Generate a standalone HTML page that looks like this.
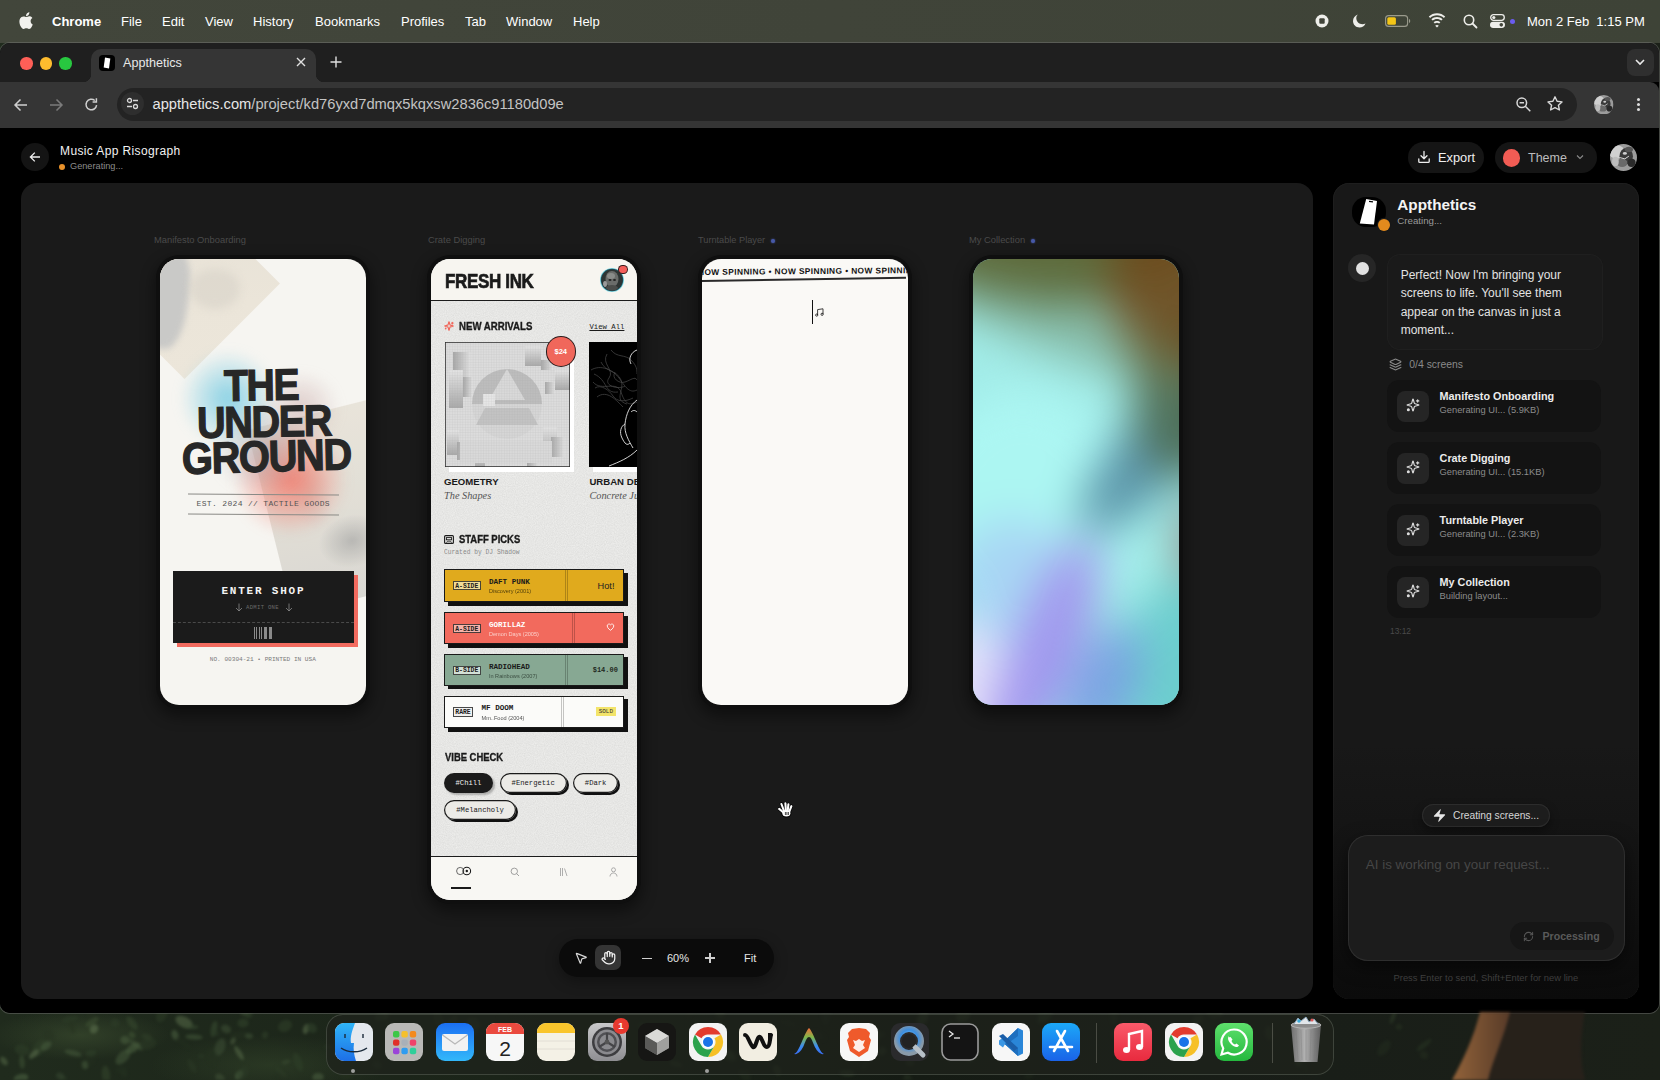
<!DOCTYPE html>
<html><head><meta charset="utf-8">
<style>
*{box-sizing:border-box;margin:0;padding:0}
html,body{width:1660px;height:1080px;overflow:hidden}
body{position:relative;font-family:"Liberation Sans",sans-serif;background:#1c2119;color:#fff}
.abs{position:absolute}
#wall{position:absolute;left:0;top:0;width:1660px;height:1080px;
 background:
 
 radial-gradient(ellipse 90px 25px at 80px 1035px,rgba(70,90,55,.45),transparent),
 radial-gradient(ellipse 120px 30px at 270px 1065px,rgba(60,80,48,.4),transparent),
 linear-gradient(90deg,#202b1d 0,#1b2419 30%,#151b14 55%,#191e18 80%,#1b2018 100%)}
#menubar{position:absolute;left:0;top:0;width:1660px;height:43px;font-size:13px;color:#fff;background:linear-gradient(90deg,#42463b,#404439 50%,#3e4337)}
#menubar span{position:absolute;top:13.5px;line-height:16px}
#win{position:absolute;left:0;top:43px;width:1659px;height:970px;background:#000;border-radius:10px;overflow:hidden;box-shadow:0 0 0 1px rgba(130,130,130,.4)}
#tabstrip{position:absolute;left:0;top:0;width:100%;height:39px;background:#1f1f1f}
#toolbar{position:absolute;left:0;top:39px;width:100%;height:46px;background:#353535;border-top-right-radius:9px}
.phone{position:absolute;overflow:hidden;border-radius:19px;box-shadow:0 0 0 4px #0f0f0f,0 6px 14px 6px rgba(0,0,0,.4)}
.phone .abs,.hv{position:absolute}
.hv{font-weight:bold;font-size:44px;line-height:36px;color:#272727;white-space:nowrap;transform-origin:0 50%;letter-spacing:-1.5px;-webkit-text-stroke:1.3px #272727}
</style></head><body>
<div id="wall"></div>
<svg class="abs" style="left:0;top:1012px;filter:blur(1.4px);opacity:.85" width="1660" height="68" viewBox="0 0 1660 68"><ellipse cx="470" cy="10" rx="3.5" ry="4.1" transform="rotate(66 470 10)" fill="#1e281a" opacity="0.36"/><ellipse cx="125" cy="28" rx="4.7" ry="4.2" transform="rotate(11 125 28)" fill="#4a6040" opacity="0.63"/><ellipse cx="72" cy="15" rx="6.9" ry="2.5" transform="rotate(75 72 15)" fill="#24301f" opacity="0.49"/><ellipse cx="91" cy="4" rx="4.4" ry="4.7" transform="rotate(77 91 4)" fill="#24301f" opacity="0.77"/><ellipse cx="239" cy="23" rx="9.5" ry="3.7" transform="rotate(173 239 23)" fill="#24301f" opacity="0.61"/><ellipse cx="1269" cy="21" rx="7.2" ry="4.3" transform="rotate(82 1269 21)" fill="#34442c" opacity="0.44"/><ellipse cx="963" cy="4" rx="7.5" ry="6.0" transform="rotate(148 963 4)" fill="#34442c" opacity="0.57"/><ellipse cx="624" cy="37" rx="9.9" ry="4.7" transform="rotate(68 624 37)" fill="#2a3824" opacity="0.35"/><ellipse cx="1304" cy="53" rx="8.6" ry="3.6" transform="rotate(72 1304 53)" fill="#1e281a" opacity="0.42"/><ellipse cx="276" cy="67" rx="6.1" ry="2.4" transform="rotate(108 276 67)" fill="#24301f" opacity="0.42"/><ellipse cx="147" cy="25" rx="3.2" ry="5.5" transform="rotate(111 147 25)" fill="#2e3e28" opacity="0.78"/><ellipse cx="452" cy="10" rx="8.2" ry="3.9" transform="rotate(125 452 10)" fill="#2a3824" opacity="0.59"/><ellipse cx="39" cy="36" rx="9.8" ry="5.5" transform="rotate(125 39 36)" fill="#2e3e28" opacity="0.76"/><ellipse cx="729" cy="43" rx="8.5" ry="5.0" transform="rotate(35 729 43)" fill="#34442c" opacity="0.52"/><ellipse cx="329" cy="35" rx="5.5" ry="2.1" transform="rotate(5 329 35)" fill="#2e3e28" opacity="0.44"/><ellipse cx="877" cy="23" rx="8.1" ry="3.4" transform="rotate(175 877 23)" fill="#2a3824" opacity="0.37"/><ellipse cx="285" cy="14" rx="7.4" ry="5.6" transform="rotate(151 285 14)" fill="#2e3e28" opacity="0.71"/><ellipse cx="123" cy="45" rx="9.4" ry="5.1" transform="rotate(135 123 45)" fill="#4a6040" opacity="0.55"/><ellipse cx="922" cy="6" rx="8.1" ry="3.9" transform="rotate(134 922 6)" fill="#2a3824" opacity="0.35"/><ellipse cx="184" cy="10" rx="9.3" ry="5.2" transform="rotate(26 184 10)" fill="#566a48" opacity="0.65"/><ellipse cx="21" cy="66" rx="7.5" ry="4.1" transform="rotate(168 21 66)" fill="#4a6040" opacity="0.72"/><ellipse cx="306" cy="17" rx="5.1" ry="3.0" transform="rotate(106 306 17)" fill="#566a48" opacity="0.73"/><ellipse cx="88" cy="50" rx="9.3" ry="4.6" transform="rotate(147 88 50)" fill="#24301f" opacity="0.41"/><ellipse cx="220" cy="35" rx="9.1" ry="5.1" transform="rotate(110 220 35)" fill="#4a6040" opacity="0.43"/><ellipse cx="360" cy="19" rx="6.6" ry="4.2" transform="rotate(137 360 19)" fill="#34442c" opacity="0.40"/><ellipse cx="402" cy="35" rx="6.6" ry="3.0" transform="rotate(94 402 35)" fill="#34442c" opacity="0.58"/><ellipse cx="439" cy="8" rx="9.6" ry="4.6" transform="rotate(66 439 8)" fill="#2a3824" opacity="0.59"/><ellipse cx="318" cy="65" rx="5.8" ry="3.9" transform="rotate(178 318 65)" fill="#4a6040" opacity="0.67"/><ellipse cx="490" cy="31" rx="5.7" ry="4.1" transform="rotate(53 490 31)" fill="#2a3824" opacity="0.60"/><ellipse cx="385" cy="3" rx="4.9" ry="2.5" transform="rotate(76 385 3)" fill="#34442c" opacity="0.42"/><ellipse cx="474" cy="19" rx="4.3" ry="5.6" transform="rotate(48 474 19)" fill="#2a3824" opacity="0.54"/><ellipse cx="121" cy="58" rx="3.5" ry="5.5" transform="rotate(82 121 58)" fill="#24301f" opacity="0.54"/><ellipse cx="1029" cy="64" rx="4.8" ry="2.7" transform="rotate(168 1029 64)" fill="#1e281a" opacity="0.53"/><ellipse cx="22" cy="50" rx="6.9" ry="2.8" transform="rotate(85 22 50)" fill="#3e5234" opacity="0.65"/><ellipse cx="312" cy="16" rx="4.4" ry="5.5" transform="rotate(131 312 16)" fill="#2e3e28" opacity="0.79"/><ellipse cx="1214" cy="1" rx="9.2" ry="3.7" transform="rotate(10 1214 1)" fill="#34442c" opacity="0.56"/><ellipse cx="646" cy="18" rx="9.8" ry="4.2" transform="rotate(44 646 18)" fill="#34442c" opacity="0.37"/><ellipse cx="265" cy="23" rx="3.6" ry="3.1" transform="rotate(118 265 23)" fill="#3e5234" opacity="0.39"/><ellipse cx="571" cy="20" rx="3.6" ry="5.8" transform="rotate(154 571 20)" fill="#1e281a" opacity="0.54"/><ellipse cx="865" cy="52" rx="6.5" ry="3.1" transform="rotate(111 865 52)" fill="#1e281a" opacity="0.57"/><ellipse cx="910" cy="50" rx="4.0" ry="4.1" transform="rotate(91 910 50)" fill="#2a3824" opacity="0.55"/><ellipse cx="847" cy="61" rx="7.9" ry="2.9" transform="rotate(6 847 61)" fill="#34442c" opacity="0.59"/><ellipse cx="27" cy="36" rx="4.7" ry="3.1" transform="rotate(82 27 36)" fill="#24301f" opacity="0.75"/><ellipse cx="133" cy="36" rx="8.2" ry="3.9" transform="rotate(146 133 36)" fill="#4a6040" opacity="0.68"/><ellipse cx="298" cy="50" rx="9.8" ry="4.0" transform="rotate(69 298 50)" fill="#2e3e28" opacity="0.70"/><ellipse cx="214" cy="17" rx="8.2" ry="3.2" transform="rotate(102 214 17)" fill="#3e5234" opacity="0.57"/><ellipse cx="676" cy="52" rx="6.8" ry="3.2" transform="rotate(15 676 52)" fill="#34442c" opacity="0.44"/><ellipse cx="390" cy="14" rx="4.5" ry="4.3" transform="rotate(26 390 14)" fill="#34442c" opacity="0.34"/><ellipse cx="1189" cy="35" rx="7.9" ry="2.9" transform="rotate(162 1189 35)" fill="#2a3824" opacity="0.35"/><ellipse cx="175" cy="23" rx="5.3" ry="3.4" transform="rotate(72 175 23)" fill="#4a6040" opacity="0.67"/><ellipse cx="70" cy="7" rx="8.8" ry="3.1" transform="rotate(168 70 7)" fill="#2e3e28" opacity="0.55"/><ellipse cx="458" cy="53" rx="6.0" ry="2.1" transform="rotate(137 458 53)" fill="#1e281a" opacity="0.46"/><ellipse cx="1043" cy="3" rx="6.2" ry="5.0" transform="rotate(116 1043 3)" fill="#2a3824" opacity="0.57"/><ellipse cx="409" cy="17" rx="7.6" ry="3.6" transform="rotate(43 409 17)" fill="#1e281a" opacity="0.42"/><ellipse cx="243" cy="11" rx="4.5" ry="5.6" transform="rotate(89 243 11)" fill="#2e3e28" opacity="0.80"/><ellipse cx="132" cy="23" rx="3.6" ry="3.0" transform="rotate(47 132 23)" fill="#3e5234" opacity="0.69"/><ellipse cx="730" cy="43" rx="4.5" ry="3.1" transform="rotate(45 730 43)" fill="#34442c" opacity="0.43"/><ellipse cx="452" cy="55" rx="3.9" ry="3.7" transform="rotate(137 452 55)" fill="#1e281a" opacity="0.45"/><ellipse cx="106" cy="63" rx="9.5" ry="4.1" transform="rotate(84 106 63)" fill="#3e5234" opacity="0.45"/><ellipse cx="220" cy="66" rx="3.8" ry="5.3" transform="rotate(126 220 66)" fill="#566a48" opacity="0.39"/><ellipse cx="826" cy="3" rx="9.7" ry="4.5" transform="rotate(95 826 3)" fill="#2a3824" opacity="0.33"/><ellipse cx="281" cy="60" rx="7.5" ry="2.3" transform="rotate(41 281 60)" fill="#2e3e28" opacity="0.45"/><ellipse cx="49" cy="23" rx="5.9" ry="4.7" transform="rotate(36 49 23)" fill="#24301f" opacity="0.38"/><ellipse cx="719" cy="14" rx="4.4" ry="3.9" transform="rotate(48 719 14)" fill="#2a3824" opacity="0.59"/><ellipse cx="605" cy="45" rx="4.0" ry="3.6" transform="rotate(38 605 45)" fill="#2a3824" opacity="0.42"/><ellipse cx="115" cy="11" rx="4.3" ry="4.6" transform="rotate(94 115 11)" fill="#2e3e28" opacity="0.65"/><ellipse cx="245" cy="0" rx="5.0" ry="3.4" transform="rotate(172 245 0)" fill="#4a6040" opacity="0.52"/><ellipse cx="1115" cy="21" rx="3.6" ry="4.8" transform="rotate(35 1115 21)" fill="#34442c" opacity="0.36"/><ellipse cx="596" cy="55" rx="3.3" ry="2.1" transform="rotate(11 596 55)" fill="#34442c" opacity="0.36"/><ellipse cx="91" cy="41" rx="5.5" ry="3.3" transform="rotate(172 91 41)" fill="#2e3e28" opacity="0.77"/><ellipse cx="1198" cy="7" rx="6.3" ry="5.1" transform="rotate(142 1198 7)" fill="#34442c" opacity="0.34"/><ellipse cx="720" cy="1" rx="5.1" ry="4.8" transform="rotate(27 720 1)" fill="#34442c" opacity="0.44"/><ellipse cx="233" cy="29" rx="3.7" ry="2.3" transform="rotate(112 233 29)" fill="#566a48" opacity="0.57"/><ellipse cx="604" cy="42" rx="8.2" ry="5.4" transform="rotate(120 604 42)" fill="#34442c" opacity="0.39"/><ellipse cx="822" cy="25" rx="4.4" ry="3.0" transform="rotate(44 822 25)" fill="#1e281a" opacity="0.36"/><ellipse cx="94" cy="17" rx="4.7" ry="4.1" transform="rotate(117 94 17)" fill="#566a48" opacity="0.80"/><ellipse cx="148" cy="32" rx="8.7" ry="5.4" transform="rotate(165 148 32)" fill="#2e3e28" opacity="0.45"/><ellipse cx="73" cy="41" rx="8.8" ry="2.8" transform="rotate(14 73 41)" fill="#4a6040" opacity="0.55"/><ellipse cx="377" cy="53" rx="3.7" ry="4.4" transform="rotate(112 377 53)" fill="#34442c" opacity="0.40"/><ellipse cx="64" cy="68" rx="3.3" ry="4.9" transform="rotate(165 64 68)" fill="#2e3e28" opacity="0.53"/><ellipse cx="46" cy="34" rx="6.4" ry="3.6" transform="rotate(143 46 34)" fill="#4a6040" opacity="0.64"/><ellipse cx="132" cy="11" rx="7.9" ry="3.6" transform="rotate(51 132 11)" fill="#3e5234" opacity="0.49"/><ellipse cx="286" cy="50" rx="4.4" ry="2.0" transform="rotate(162 286 50)" fill="#3e5234" opacity="0.53"/><ellipse cx="22" cy="38" rx="7.5" ry="5.6" transform="rotate(16 22 38)" fill="#2e3e28" opacity="0.68"/><ellipse cx="249" cy="24" rx="4.1" ry="2.7" transform="rotate(12 249 24)" fill="#4a6040" opacity="0.49"/><ellipse cx="1214" cy="3" rx="5.2" ry="4.4" transform="rotate(115 1214 3)" fill="#1e281a" opacity="0.49"/><ellipse cx="1196" cy="11" rx="4.6" ry="3.6" transform="rotate(152 1196 11)" fill="#2a3824" opacity="0.47"/><ellipse cx="60" cy="64" rx="4.1" ry="3.4" transform="rotate(27 60 64)" fill="#4a6040" opacity="0.37"/><ellipse cx="34" cy="42" rx="6.4" ry="2.9" transform="rotate(137 34 42)" fill="#566a48" opacity="0.73"/><ellipse cx="520" cy="25" rx="6.5" ry="4.6" transform="rotate(7 520 25)" fill="#1e281a" opacity="0.39"/><ellipse cx="1045" cy="5" rx="9.3" ry="4.6" transform="rotate(141 1045 5)" fill="#2a3824" opacity="0.60"/><ellipse cx="1424" cy="33" rx="9.4" ry="2.7" transform="rotate(142 1424 33)" fill="#2a3824" opacity="0.55"/><ellipse cx="1114" cy="3" rx="9.8" ry="3.8" transform="rotate(94 1114 3)" fill="#2a3824" opacity="0.38"/><ellipse cx="777" cy="58" rx="5.6" ry="3.5" transform="rotate(66 777 58)" fill="#34442c" opacity="0.53"/><ellipse cx="641" cy="12" rx="3.3" ry="5.3" transform="rotate(46 641 12)" fill="#1e281a" opacity="0.58"/><ellipse cx="1299" cy="50" rx="4.6" ry="3.2" transform="rotate(113 1299 50)" fill="#34442c" opacity="0.57"/><ellipse cx="191" cy="15" rx="7.6" ry="2.1" transform="rotate(0 191 15)" fill="#3e5234" opacity="0.59"/><ellipse cx="194" cy="25" rx="8.8" ry="2.6" transform="rotate(3 194 25)" fill="#4a6040" opacity="0.55"/><ellipse cx="92" cy="10" rx="7.7" ry="3.1" transform="rotate(146 92 10)" fill="#3e5234" opacity="0.64"/><ellipse cx="815" cy="24" rx="6.1" ry="5.7" transform="rotate(132 815 24)" fill="#2a3824" opacity="0.31"/><ellipse cx="85" cy="53" rx="3.1" ry="4.2" transform="rotate(169 85 53)" fill="#4a6040" opacity="0.58"/><ellipse cx="908" cy="68" rx="6.3" ry="4.2" transform="rotate(68 908 68)" fill="#34442c" opacity="0.32"/><ellipse cx="951" cy="12" rx="4.8" ry="4.6" transform="rotate(22 951 12)" fill="#1e281a" opacity="0.58"/><ellipse cx="382" cy="4" rx="7.8" ry="4.7" transform="rotate(165 382 4)" fill="#34442c" opacity="0.49"/><ellipse cx="1399" cy="15" rx="3.1" ry="3.0" transform="rotate(42 1399 15)" fill="#2a3824" opacity="0.52"/><ellipse cx="347" cy="62" rx="7.8" ry="4.7" transform="rotate(176 347 62)" fill="#24301f" opacity="0.66"/><ellipse cx="1243" cy="30" rx="7.0" ry="3.2" transform="rotate(38 1243 30)" fill="#2a3824" opacity="0.47"/><ellipse cx="249" cy="2" rx="3.8" ry="4.5" transform="rotate(29 249 2)" fill="#3e5234" opacity="0.36"/><ellipse cx="201" cy="44" rx="3.3" ry="2.3" transform="rotate(8 201 44)" fill="#2e3e28" opacity="0.44"/><ellipse cx="1384" cy="36" rx="9.2" ry="5.0" transform="rotate(128 1384 36)" fill="#2a3824" opacity="0.36"/><ellipse cx="162" cy="2" rx="8.9" ry="5.2" transform="rotate(114 162 2)" fill="#2e3e28" opacity="0.56"/><ellipse cx="192" cy="54" rx="7.5" ry="3.2" transform="rotate(61 192 54)" fill="#2e3e28" opacity="0.47"/><ellipse cx="599" cy="30" rx="5.4" ry="4.8" transform="rotate(97 599 30)" fill="#2a3824" opacity="0.47"/><ellipse cx="504" cy="7" rx="8.8" ry="5.9" transform="rotate(107 504 7)" fill="#1e281a" opacity="0.38"/><ellipse cx="923" cy="6" rx="7.9" ry="5.1" transform="rotate(113 923 6)" fill="#34442c" opacity="0.58"/><ellipse cx="1424" cy="43" rx="3.9" ry="4.4" transform="rotate(124 1424 43)" fill="#2a3824" opacity="0.40"/><ellipse cx="474" cy="11" rx="7.6" ry="5.0" transform="rotate(31 474 11)" fill="#34442c" opacity="0.47"/><ellipse cx="183" cy="31" rx="9.2" ry="3.0" transform="rotate(34 183 31)" fill="#24301f" opacity="0.42"/><ellipse cx="226" cy="17" rx="5.3" ry="4.1" transform="rotate(29 226 17)" fill="#4a6040" opacity="0.47"/><ellipse cx="215" cy="21" rx="5.1" ry="3.1" transform="rotate(20 215 21)" fill="#2e3e28" opacity="0.44"/><ellipse cx="875" cy="28" rx="9.4" ry="3.7" transform="rotate(103 875 28)" fill="#34442c" opacity="0.55"/><ellipse cx="968" cy="44" rx="7.5" ry="4.3" transform="rotate(41 968 44)" fill="#2a3824" opacity="0.44"/><ellipse cx="608" cy="53" rx="7.4" ry="3.0" transform="rotate(76 608 53)" fill="#1e281a" opacity="0.56"/><ellipse cx="751" cy="45" rx="9.3" ry="3.3" transform="rotate(2 751 45)" fill="#2a3824" opacity="0.31"/><ellipse cx="788" cy="11" rx="9.6" ry="4.1" transform="rotate(18 788 11)" fill="#1e281a" opacity="0.36"/><ellipse cx="690" cy="1" rx="5.6" ry="3.4" transform="rotate(134 690 1)" fill="#1e281a" opacity="0.36"/><ellipse cx="745" cy="63" rx="7.3" ry="4.6" transform="rotate(45 745 63)" fill="#2a3824" opacity="0.30"/><ellipse cx="607" cy="29" rx="5.5" ry="3.1" transform="rotate(40 607 29)" fill="#1e281a" opacity="0.59"/><ellipse cx="239" cy="63" rx="3.5" ry="5.2" transform="rotate(35 239 63)" fill="#4a6040" opacity="0.72"/><ellipse cx="212" cy="45" rx="8.8" ry="5.2" transform="rotate(74 212 45)" fill="#24301f" opacity="0.64"/><ellipse cx="1131" cy="32" rx="4.6" ry="4.8" transform="rotate(124 1131 32)" fill="#1e281a" opacity="0.36"/><ellipse cx="4" cy="49" rx="5.0" ry="3.0" transform="rotate(54 4 49)" fill="#566a48" opacity="0.63"/><ellipse cx="124" cy="61" rx="4.1" ry="3.2" transform="rotate(69 124 61)" fill="#24301f" opacity="0.76"/><ellipse cx="1137" cy="10" rx="7.4" ry="2.1" transform="rotate(2 1137 10)" fill="#1e281a" opacity="0.39"/><ellipse cx="882" cy="39" rx="4.3" ry="3.8" transform="rotate(141 882 39)" fill="#34442c" opacity="0.54"/><ellipse cx="243" cy="61" rx="7.3" ry="5.1" transform="rotate(120 243 61)" fill="#2e3e28" opacity="0.44"/><ellipse cx="1005" cy="36" rx="6.1" ry="5.5" transform="rotate(100 1005 36)" fill="#2a3824" opacity="0.55"/><ellipse cx="239" cy="41" rx="8.1" ry="2.6" transform="rotate(58 239 41)" fill="#566a48" opacity="0.65"/><ellipse cx="1393" cy="5" rx="7.5" ry="2.1" transform="rotate(110 1393 5)" fill="#34442c" opacity="0.54"/><ellipse cx="136" cy="33" rx="8.3" ry="2.6" transform="rotate(38 136 33)" fill="#4a6040" opacity="0.50"/></svg>
<div id="menubar">
 <svg class="abs" style="left:19px;top:12px" width="14" height="17" viewBox="0 0 14 17"><path fill="#f2f2ee" d="M11.6 9.1c0-2 1.7-3 1.8-3.1-1-1.4-2.5-1.6-3-1.7-1.3-.1-2.5.8-3.1.8-.7 0-1.7-.8-2.8-.7C3.1 4.4 1.8 5.2 1.1 6.5-.4 9.1.7 12.9 2.1 15c.7 1 1.5 2.1 2.6 2 1-.1 1.4-.7 2.7-.7 1.2 0 1.6.7 2.7.6 1.1 0 1.8-1 2.5-2 .8-1.1 1.1-2.2 1.1-2.3 0 0-2.1-.8-2.1-3.500zM9.5 3c.6-.7 1-1.7.9-2.7-.9 0-1.9.6-2.5 1.300-.5.6-1 1.600-.9 2.600 1 .1 1.900-.5 2.500-1.200z"/></svg>
 <span style="left:52px;font-weight:bold">Chrome</span>
 <span style="left:121px">File</span>
 <span style="left:162px">Edit</span>
 <span style="left:205px">View</span>
 <span style="left:253px">History</span>
 <span style="left:315px">Bookmarks</span>
 <span style="left:401px">Profiles</span>
 <span style="left:465px">Tab</span>
 <span style="left:506px">Window</span>
 <span style="left:573px">Help</span>
 <!-- right status -->
 <svg class="abs" style="left:1315px;top:14px" width="14" height="14" viewBox="0 0 14 14"><circle cx="7" cy="7" r="6.5" fill="#eeeeea"/><rect x="4.3" y="4.3" width="5.4" height="5.4" rx="1" fill="#41443a"/></svg>
 <svg class="abs" style="left:1352px;top:14px" width="15" height="14" viewBox="0 0 15 14"><path fill="#eeeeea" d="M6 0.5C3 1.3 1 4 1 7c0 3.6 2.9 6.5 6.5 6.5 2.700 0 5-1.600 6-4-1 .5-2 .7-3 .7C7 10.2 4.300 7.500 4.300 4c0-1.300.6-2.600 1.700-3.500z"/></svg>
 <svg class="abs" style="left:1385px;top:15px" width="26" height="12" viewBox="0 0 26 12"><rect x="0.6" y="0.6" width="22" height="10.8" rx="3" fill="none" stroke="#9a9a8c" stroke-width="1.1"/><rect x="2.3" y="2.3" width="8.6" height="7.4" rx="1.5" fill="#f3c517"/><path d="M24 4v4c.8-.3 1.2-1 1.2-2s-.4-1.700-1.200-2z" fill="#9a9a8c"/></svg>
 <svg class="abs" style="left:1428px;top:13px" width="18" height="15" viewBox="0 0 18 15"><path fill="#eeeeea" d="M9 2.2c2.700 0 5.100 1 6.900 2.700l1.300-1.300C15 1.500 12.100.3 9 .3S3 1.500.8 3.600l1.300 1.300C3.900 3.200 6.300 2.200 9 2.200zM9 6c1.700 0 3.100.6 4.300 1.600l1.300-1.300C13.100 5 11.100 4.100 9 4.100S4.900 5 3.400 6.300l1.300 1.300C5.900 6.600 7.300 6 9 6zm0 3.700c.8 0 1.500.3 2.100.8l1.300-1.300C11.500 8.400 10.300 7.900 9 7.900s-2.500.5-3.400 1.300l1.300 1.300c.6-.5 1.300-.8 2.100-.8zM9 14.500l1.800-1.800c-.5-.4-1.100-.6-1.800-.6s-1.300.2-1.800.6z"/></svg>
 <svg class="abs" style="left:1463px;top:14px" width="15" height="15" viewBox="0 0 15 15"><circle cx="6" cy="6" r="4.7" fill="none" stroke="#eeeeea" stroke-width="1.6"/><path d="M9.500 9.500l4 4" stroke="#eeeeea" stroke-width="1.8" stroke-linecap="round"/></svg>
 <svg class="abs" style="left:1490px;top:14px" width="15" height="14" viewBox="0 0 15 14"><rect x="0.700" y="0.700" width="13.600" height="5.600" rx="2.800" fill="none" stroke="#eeeeea" stroke-width="1.300"/><circle cx="3.800" cy="3.500" r="1.600" fill="#eeeeea"/><rect x="0" y="7.700" width="15" height="6.300" rx="3.150" fill="#eeeeea"/><circle cx="11.300" cy="10.850" r="1.800" fill="#41443a"/></svg>
 <div class="abs" style="left:1510px;top:19px;width:5px;height:5px;border-radius:50%;background:#6a5cf0"></div>
 <span style="left:1527px;white-space:pre">Mon 2 Feb  1:15 PM</span>
</div>
<div id="win">
 <div id="tabstrip">
  <div class="abs" style="left:20px;top:14px;width:12.5px;height:12.5px;border-radius:50%;background:#fe5f57"></div>
  <div class="abs" style="left:39.5px;top:14px;width:12.5px;height:12.5px;border-radius:50%;background:#febc2e"></div>
  <div class="abs" style="left:59px;top:14px;width:12.5px;height:12.5px;border-radius:50%;background:#28c840"></div>
  <!-- active tab -->
  <div class="abs" style="left:91px;top:6px;width:225px;height:34px;background:#353535;border-radius:10px 10px 0 0"></div>
  <div class="abs" style="left:83px;top:31px;width:8px;height:8px;background:radial-gradient(circle at 0 0,#1f1f1f 8px,#353535 8.5px)"></div>
  <div class="abs" style="left:316px;top:31px;width:8px;height:8px;background:radial-gradient(circle at 100% 0,#1f1f1f 8px,#353535 8.5px)"></div>
  <div class="abs" style="left:99px;top:12px;width:15.5px;height:15.5px;border-radius:4px;background:#000"></div>
  <svg class="abs" style="left:99px;top:12px" width="16" height="16" viewBox="0 0 16 16"><path d="M6 2.6 L11.3 3.4 L10 13.4 L4.7 12.6 Z" fill="#fff"/></svg>
  <div class="abs" style="left:123px;top:12px;font-size:12.6px;color:#e8e8e8;line-height:16px">Appthetics</div>
  <svg class="abs" style="left:295px;top:13px" width="12" height="12" viewBox="0 0 12 12"><path d="M2 2l8 8M10 2l-8 8" stroke="#e0e0e0" stroke-width="1.4"/></svg>
  <svg class="abs" style="left:330px;top:13px" width="12" height="12" viewBox="0 0 12 12"><path d="M6 0.5v11M0.5 6h11" stroke="#e0e0e0" stroke-width="1.4"/></svg>
  <div class="abs" style="left:1627px;top:6px;width:27px;height:27px;border-radius:8px;background:#2f2f2f"></div>
  <svg class="abs" style="left:1634px;top:14px" width="12" height="10" viewBox="0 0 12 10"><path d="M2 3l4 4 4-4" stroke="#eaeaea" stroke-width="1.6" fill="none"/></svg>
 </div>
 <div id="toolbar">
  <svg class="abs" style="left:13px;top:15px" width="16" height="16" viewBox="0 0 16 16"><path d="M14 8H2.5M7.5 2.5L2 8l5.5 5.5" stroke="#cfcfcf" stroke-width="1.5" fill="none"/></svg>
  <svg class="abs" style="left:48px;top:15px" width="16" height="16" viewBox="0 0 16 16"><path d="M2 8h11.5M8.5 2.5L14 8l-5.5 5.5" stroke="#7b7b7b" stroke-width="1.5" fill="none"/></svg>
  <svg class="abs" style="left:83px;top:14px" width="17" height="17" viewBox="0 0 17 17"><path d="M13.6 9.2A5.3 5.3 0 1 1 11.8 4.5" stroke="#cfcfcf" stroke-width="1.5" fill="none"/><path d="M13.4 2.2v3.8H9.6" stroke="#cfcfcf" stroke-width="1.5" fill="none"/></svg>
  <div class="abs" style="left:117px;top:6px;width:1460px;height:33px;border-radius:17px;background:#232323"></div>
  <div class="abs" style="left:121px;top:10px;width:23px;height:23px;border-radius:50%;background:#2e2e2e"></div>
  <svg class="abs" style="left:125px;top:14px" width="15" height="15" viewBox="0 0 15 15"><circle cx="4.5" cy="4.5" r="2" stroke="#d8d8d8" stroke-width="1.3" fill="none"/><path d="M8 4.5h5M2 10.5h5" stroke="#d8d8d8" stroke-width="1.3"/><circle cx="10.5" cy="10.5" r="2" stroke="#d8d8d8" stroke-width="1.3" fill="none"/></svg>
  <div class="abs" style="left:152.5px;top:13px;font-size:14.7px;line-height:19px;color:#e6e6e6;letter-spacing:0">appthetics.com<span style="color:#c4c4c4">/project/kd76yxd7dmqx5kqxsw2836c91180d09e</span></div>
  <svg class="abs" style="left:1515px;top:14px" width="17" height="17" viewBox="0 0 17 17"><circle cx="6.8" cy="6.8" r="4.8" stroke="#d8d8d8" stroke-width="1.5" fill="none"/><path d="M10.3 10.3l5 5M4.6 6.8h4.4" stroke="#d8d8d8" stroke-width="1.5"/></svg>
  <svg class="abs" style="left:1546px;top:13px" width="18" height="18" viewBox="0 0 18 18"><path d="M9 1.8l2.1 4.5 4.9.6-3.6 3.3 1 4.8L9 12.6 4.6 15l1-4.8L2 6.9l4.9-.6z" stroke="#d8d8d8" stroke-width="1.4" fill="none" stroke-linejoin="round"/></svg>
  <svg class="abs" style="left:1594px;top:12.5px" width="19.5" height="19.5" viewBox="0 0 20 20"><defs><clipPath id="av1594"><circle cx="10" cy="10" r="10"/></clipPath></defs><g clip-path="url(#av1594)"><rect width="20" height="20" fill="#9c9c9c"/><ellipse cx="5" cy="6" rx="6" ry="5" fill="#d0d0d0"/><ellipse cx="12" cy="9" rx="5" ry="6" fill="#3a3a3a"/><ellipse cx="9" cy="14" rx="4" ry="3" fill="#6a6a6a"/><ellipse cx="14" cy="4" rx="3" ry="2" fill="#555"/><ellipse cx="4" cy="13" rx="2.5" ry="3.5" fill="#bdbdbd"/><ellipse cx="16" cy="14" rx="3" ry="3" fill="#2a2a2a"/><ellipse cx="11" cy="7" rx="1.5" ry="1" fill="#cfcfcf"/><path d="M7 10l4 1 3-2" stroke="#e0e0e0" stroke-width=".7" fill="none"/></g></svg>
  <div class="abs" style="left:1636.5px;top:16px;width:3px;height:3px;border-radius:50%;background:#ddd;box-shadow:0 5px 0 #ddd,0 10px 0 #ddd"></div>
 </div>
 
</div>
<div id="appx" class="abs" style="left:0;top:128px;width:1659px;height:884.5px;background:#000;border-radius:0 0 10px 10px">
 <!-- header -->
 <div class="abs" style="left:21px;top:15px;width:28px;height:28px;border-radius:50%;background:#141414"></div>
 <svg class="abs" style="left:29px;top:23px" width="12" height="12" viewBox="0 0 12 12"><path d="M11 6H1.5M5.8 1.6L1.4 6l4.4 4.4" stroke="#eee" stroke-width="1.3" fill="none"/></svg>
 <div class="abs" style="left:60px;top:15px;font-size:12px;letter-spacing:.38px;line-height:16px;color:#f2f2f2">Music App Risograph</div>
 <div class="abs" style="left:59px;top:35.5px;width:6px;height:6px;border-radius:50%;background:#e8912a"></div>
 <div class="abs" style="left:70px;top:32px;font-size:9.2px;line-height:12px;color:#8c8c8c">Generating...</div>

 <div class="abs" style="left:1408px;top:14px;width:76px;height:31px;border-radius:16px;background:#151515"></div>
 <svg class="abs" style="left:1417px;top:22px" width="14" height="14" viewBox="0 0 14 14"><path d="M7 1.5v7.2M4 5.8l3 3 3-3M1.8 9v2.4c0 .6.5 1 1 1h8.4c.6 0 1-.4 1-1V9" stroke="#eee" stroke-width="1.3" fill="none" stroke-linecap="round" stroke-linejoin="round"/></svg>
 <div class="abs" style="left:1438px;top:22px;font-size:12.8px;line-height:16px;color:#f0f0f0">Export</div>
 <div class="abs" style="left:1495px;top:14px;width:102px;height:31px;border-radius:16px;background:#151515"></div>
 <div class="abs" style="left:1502.5px;top:21px;width:17.5px;height:17.5px;border-radius:50%;background:#f25c54"></div>
 <div class="abs" style="left:1528px;top:22px;font-size:12.5px;line-height:16px;color:#bdbdbd">Theme</div>
 <svg class="abs" style="left:1575px;top:25px" width="10" height="8" viewBox="0 0 10 8"><path d="M2 2.5l3 3 3-3" stroke="#8a8a8a" stroke-width="1.1" fill="none"/></svg>
 <svg class="abs" style="left:1609.5px;top:15.5px" width="27" height="27" viewBox="0 0 20 20"><defs><clipPath id="av1609"><circle cx="10" cy="10" r="10"/></clipPath></defs><g clip-path="url(#av1609)"><rect width="20" height="20" fill="#9c9c9c"/><ellipse cx="5" cy="6" rx="6" ry="5" fill="#d0d0d0"/><ellipse cx="12" cy="9" rx="5" ry="6" fill="#3a3a3a"/><ellipse cx="9" cy="14" rx="4" ry="3" fill="#6a6a6a"/><ellipse cx="14" cy="4" rx="3" ry="2" fill="#555"/><ellipse cx="4" cy="13" rx="2.5" ry="3.5" fill="#bdbdbd"/><ellipse cx="16" cy="14" rx="3" ry="3" fill="#2a2a2a"/><ellipse cx="11" cy="7" rx="1.5" ry="1" fill="#cfcfcf"/><path d="M7 10l4 1 3-2" stroke="#e0e0e0" stroke-width=".7" fill="none"/></g></svg>

 <!-- canvas -->
 <div id="canvas" class="abs" style="left:21px;top:55px;width:1292px;height:816px;border-radius:16px;background:#1a1a1a;overflow:hidden"></div>

</div>
<div id="panel" class="abs" style="left:1333px;top:183px;width:306px;height:816px;border-radius:16px;background:#181818;box-shadow:inset 0 0 0 1px #1e1e1e;overflow:hidden">
 <div class="abs" style="left:0;top:560px;width:306px;height:256px;background:linear-gradient(rgba(10,10,10,0),rgba(14,14,14,.35) 35%,#0b0b0b 100%)"></div>
 <!-- header -->
 <div class="abs" style="left:19px;top:14px;width:34px;height:30px;border-radius:14px;background:#000"></div>
 <svg class="abs" style="left:19px;top:14px" width="34" height="30" viewBox="0 0 34 30"><path d="M14.2 2.1 L25 4 L22 27.4 L7.8 26.4 Z" fill="#fff"/><rect x="17" y="4" width="4" height="1.2" fill="#000" transform="rotate(8 19 4.6)"/></svg>
 <div class="abs" style="left:44.5px;top:35.5px;width:12px;height:12px;border-radius:50%;background:#e28a1d;box-shadow:0 0 0 1.2px #181818"></div>
 <div class="abs" style="left:64.3px;top:12.5px;font-size:15.3px;line-height:18px;font-weight:bold;color:#f4f4f4">Appthetics</div>
 <div class="abs" style="left:64.3px;top:31.5px;font-size:9.7px;line-height:12px;color:#9a9a9a">Creating...</div>
 <!-- ai message -->
 <div class="abs" style="left:15px;top:71px;width:28px;height:28px;border-radius:50%;background:#262626"></div>
 <div class="abs" style="left:22.5px;top:78.5px;width:13px;height:13px;border-radius:50%;background:#e2e2e2"></div>
 <div class="abs" style="left:53.5px;top:71.3px;width:216.5px;height:95.3px;border-radius:13px;background:#1a1a1a;box-shadow:inset 0 0 0 1px #1f1f1f"></div>
 <div class="abs" style="left:67.7px;top:82.9px;width:200px;font-size:12px;line-height:18.4px;color:#e2e2e2">Perfect! Now I'm bringing your<br>screens to life. You'll see them<br>appear on the canvas in just a<br>moment...</div>
 <svg class="abs" style="left:56px;top:175px" width="13" height="13" viewBox="0 0 24 24" fill="none" stroke="#8a8a8a" stroke-width="2" stroke-linecap="round" stroke-linejoin="round"><path d="m12.83 2.18a2 2 0 0 0-1.66 0L2.6 6.08a1 1 0 0 0 0 1.83l8.58 3.91a2 2 0 0 0 1.66 0l8.58-3.9a1 1 0 0 0 0-1.83Z"/><path d="m22 17.65-9.17 4.16a2 2 0 0 1-1.66 0L2 17.65"/><path d="m22 12.65-9.17 4.16a2 2 0 0 1-1.66 0L2 12.65"/></svg>
 <div class="abs" style="left:76.3px;top:175.5px;font-size:10.4px;line-height:12px;color:#8a8a8a">0/4 screens</div>
 <div class="abs" style="left:54.4px;top:197px;width:214px;height:52px;border-radius:12px;background:#131313"></div>
 <div class="abs" style="left:64px;top:207.7px;width:32px;height:31px;border-radius:8px;background:#252525"></div>
 <svg class="abs" style="left:73px;top:214.5px" width="14" height="14" viewBox="0 0 24 24" fill="none" stroke="#dcdcdc" stroke-width="2" stroke-linecap="round" stroke-linejoin="round"><path d="M9.937 15.5A2 2 0 0 0 8.5 14.063l-6.135-1.582a.5.5 0 0 1 0-.962L8.5 9.936A2 2 0 0 0 9.937 8.5l1.582-6.135a.5.5 0 0 1 .963 0L14.063 8.5A2 2 0 0 0 15.5 9.937l6.135 1.581a.5.5 0 0 1 0 .964L15.5 14.063a2 2 0 0 0-1.437 1.437l-1.582 6.135a.5.5 0 0 1-.963 0z"/><path d="M20 3v4M22 5h-4"/><circle cx="4" cy="20" r="1.6" fill="#dcdcdc"/></svg>
 <div class="abs" style="left:106.6px;top:207px;font-size:10.8px;line-height:13px;font-weight:bold;color:#ececec;white-space:nowrap">Manifesto Onboarding</div>
 <div class="abs" style="left:106.6px;top:220.7px;font-size:9.3px;line-height:12px;color:#8c8c8c;white-space:nowrap">Generating UI... (5.9KB)</div>
 <div class="abs" style="left:54.4px;top:259px;width:214px;height:52px;border-radius:12px;background:#131313"></div>
 <div class="abs" style="left:64px;top:269.7px;width:32px;height:31px;border-radius:8px;background:#252525"></div>
 <svg class="abs" style="left:73px;top:276.5px" width="14" height="14" viewBox="0 0 24 24" fill="none" stroke="#dcdcdc" stroke-width="2" stroke-linecap="round" stroke-linejoin="round"><path d="M9.937 15.5A2 2 0 0 0 8.5 14.063l-6.135-1.582a.5.5 0 0 1 0-.962L8.5 9.936A2 2 0 0 0 9.937 8.5l1.582-6.135a.5.5 0 0 1 .963 0L14.063 8.5A2 2 0 0 0 15.5 9.937l6.135 1.581a.5.5 0 0 1 0 .964L15.5 14.063a2 2 0 0 0-1.437 1.437l-1.582 6.135a.5.5 0 0 1-.963 0z"/><path d="M20 3v4M22 5h-4"/><circle cx="4" cy="20" r="1.6" fill="#dcdcdc"/></svg>
 <div class="abs" style="left:106.6px;top:269px;font-size:10.8px;line-height:13px;font-weight:bold;color:#ececec;white-space:nowrap">Crate Digging</div>
 <div class="abs" style="left:106.6px;top:282.7px;font-size:9.3px;line-height:12px;color:#8c8c8c;white-space:nowrap">Generating UI... (15.1KB)</div>
 <div class="abs" style="left:54.4px;top:321px;width:214px;height:52px;border-radius:12px;background:#131313"></div>
 <div class="abs" style="left:64px;top:331.7px;width:32px;height:31px;border-radius:8px;background:#252525"></div>
 <svg class="abs" style="left:73px;top:338.5px" width="14" height="14" viewBox="0 0 24 24" fill="none" stroke="#dcdcdc" stroke-width="2" stroke-linecap="round" stroke-linejoin="round"><path d="M9.937 15.5A2 2 0 0 0 8.5 14.063l-6.135-1.582a.5.5 0 0 1 0-.962L8.5 9.936A2 2 0 0 0 9.937 8.5l1.582-6.135a.5.5 0 0 1 .963 0L14.063 8.5A2 2 0 0 0 15.5 9.937l6.135 1.581a.5.5 0 0 1 0 .964L15.5 14.063a2 2 0 0 0-1.437 1.437l-1.582 6.135a.5.5 0 0 1-.963 0z"/><path d="M20 3v4M22 5h-4"/><circle cx="4" cy="20" r="1.6" fill="#dcdcdc"/></svg>
 <div class="abs" style="left:106.6px;top:331px;font-size:10.8px;line-height:13px;font-weight:bold;color:#ececec;white-space:nowrap">Turntable Player</div>
 <div class="abs" style="left:106.6px;top:344.7px;font-size:9.3px;line-height:12px;color:#8c8c8c;white-space:nowrap">Generating UI... (2.3KB)</div>
 <div class="abs" style="left:54.4px;top:383px;width:214px;height:52px;border-radius:12px;background:#131313"></div>
 <div class="abs" style="left:64px;top:393.7px;width:32px;height:31px;border-radius:8px;background:#252525"></div>
 <svg class="abs" style="left:73px;top:400.5px" width="14" height="14" viewBox="0 0 24 24" fill="none" stroke="#dcdcdc" stroke-width="2" stroke-linecap="round" stroke-linejoin="round"><path d="M9.937 15.5A2 2 0 0 0 8.5 14.063l-6.135-1.582a.5.5 0 0 1 0-.962L8.5 9.936A2 2 0 0 0 9.937 8.5l1.582-6.135a.5.5 0 0 1 .963 0L14.063 8.5A2 2 0 0 0 15.5 9.937l6.135 1.581a.5.5 0 0 1 0 .964L15.5 14.063a2 2 0 0 0-1.437 1.437l-1.582 6.135a.5.5 0 0 1-.963 0z"/><path d="M20 3v4M22 5h-4"/><circle cx="4" cy="20" r="1.6" fill="#dcdcdc"/></svg>
 <div class="abs" style="left:106.6px;top:393px;font-size:10.8px;line-height:13px;font-weight:bold;color:#ececec;white-space:nowrap">My Collection</div>
 <div class="abs" style="left:106.6px;top:406.7px;font-size:9.3px;line-height:12px;color:#8c8c8c;white-space:nowrap">Building layout...</div>
 <div class="abs" style="left:57px;top:442px;font-size:8.4px;line-height:12px;color:#4a4a4a">13:12</div>
 <!-- bottom -->
 <div class="abs" style="left:89px;top:621px;width:128px;height:23px;border-radius:12px;background:#1d1d1d;box-shadow:inset 0 0 0 1px #2c2c2c,0 4px 10px rgba(0,0,0,.4)"></div>
 <svg class="abs" style="left:99px;top:625px" width="15" height="15" viewBox="0 0 24 24" fill="#e6e6e6"><path d="M4 14a1 1 0 0 1-.78-1.630l9.900-10.200a.500.500 0 0 1 .860.460l-1.920 6.020A1 1 0 0 0 13 10h7a1 1 0 0 1 .780 1.630l-9.900 10.200a.500.500 0 0 1-.860-.460l1.920-6.020A1 1 0 0 0 11 14z"/></svg>
 <div class="abs" style="left:120px;top:626.5px;font-size:10.25px;line-height:12px;color:#d6d6d6">Creating screens...</div>
 <div class="abs" style="left:14.7px;top:652px;width:277.3px;height:126.4px;border-radius:20px;background:#1c1c1c;box-shadow:inset 0 0 0 1px #2e2e2e,0 6px 18px rgba(0,0,0,.5)"></div>
 <div class="abs" style="left:32.8px;top:673.5px;font-size:13.4px;line-height:16px;color:#464646">AI is working on your request...</div>
 <div class="abs" style="left:176.5px;top:739px;width:104px;height:28px;border-radius:14px;background:#161616"></div>
 <svg class="abs" style="left:190px;top:747.5px" width="11" height="11" viewBox="0 0 24 24" fill="none" stroke="#575757" stroke-width="2.2" stroke-linecap="round" stroke-linejoin="round"><path d="M3 12a9 9 0 0 1 9-9 9.75 9.75 0 0 1 6.74 2.74L21 8"/><path d="M21 3v5h-5"/><path d="M21 12a9 9 0 0 1-9 9 9.75 9.75 0 0 1-6.74-2.74L3 16"/><path d="M8 16H3v5"/></svg>
 <div class="abs" style="left:209.5px;top:746.5px;font-size:10.6px;line-height:13px;font-weight:bold;color:#5a5a5a">Processing</div>
 <div class="abs" style="left:60.5px;top:789px;font-size:9.4px;line-height:12px;color:#3e3e3e">Press Enter to send, Shift+Enter for new line</div>
</div>
<!-- canvas labels -->
<div class="abs" style="left:154px;top:235px;font-size:9.35px;line-height:11px;color:#4a4a4a;white-space:nowrap">Manifesto Onboarding</div>
<div class="abs" style="left:428px;top:235px;font-size:9.35px;line-height:11px;color:#4a4a4a;white-space:nowrap">Crate Digging</div>
<div class="abs" style="left:698px;top:235px;font-size:9.2px;line-height:11px;color:#4a4a4a;white-space:nowrap">Turntable Player</div>
<div class="abs" style="left:770.5px;top:238.5px;width:4px;height:4px;border-radius:50%;background:#4759a8;box-shadow:0 0 2px #4759a8"></div>
<div class="abs" style="left:969px;top:235px;font-size:9.35px;line-height:11px;color:#4a4a4a;white-space:nowrap">My Collection</div>
<div class="abs" style="left:1031px;top:238.5px;width:4px;height:4px;border-radius:50%;background:#4759a8;box-shadow:0 0 2px #4759a8"></div>

<!-- phone 1 -->
<div class="phone" style="left:160px;top:259px;width:206px;height:446px;background:#f6f5f1">
 <div class="abs" style="left:-43.5px;top:-43.5px;width:135px;height:135px;transform:rotate(45deg);background:linear-gradient(135deg,#e6e1d6,#ebe5d9 60%,#ece6da)"></div>
 <div class="abs" style="left:-14px;top:-10px;width:42px;height:100px;border-radius:40%;background:#c9c9c7;filter:blur(3px);transform:rotate(8deg)"></div>
 <div class="abs" style="left:30px;top:10px;width:50px;height:40px;border-radius:50%;background:rgba(215,210,200,.6);filter:blur(4px)"></div>
 <div class="abs" style="left:108px;top:150px;width:150px;height:190px;transform:rotate(-14deg);background:
   radial-gradient(ellipse 45px 35px at 50% 70%,rgba(160,160,158,.75),transparent 75%),
   radial-gradient(ellipse 30px 50px at 30% 40%,rgba(200,195,185,.6),transparent 75%),
   linear-gradient(#e6e1d6,#d5d3cd);opacity:.85"></div>
 <div class="abs" style="left:18px;top:92px;width:100px;height:95px;border-radius:50%;background:radial-gradient(circle,rgba(110,200,225,.8),rgba(150,210,235,0) 70%);filter:blur(6px)"></div>
 <div class="abs" style="left:95px;top:115px;width:90px;height:70px;border-radius:50%;background:radial-gradient(circle,rgba(190,150,150,.45),transparent 70%);filter:blur(6px)"></div>
 <div class="abs" style="left:70px;top:165px;width:120px;height:110px;border-radius:50%;background:radial-gradient(circle,rgba(245,110,95,.8),rgba(245,120,100,0) 70%);filter:blur(6px)"></div>
 <div class="abs" style="left:45px;top:150px;width:110px;height:80px;border-radius:50%;background:radial-gradient(circle,rgba(150,150,160,.45),transparent 70%);filter:blur(6px)"></div>
 <div class="hv" style="left:63.5px;top:108.5px;transform:scaleX(.89) rotate(-1deg)">THE</div>
 <div class="hv" style="left:37.3px;top:146.3px;transform:scaleX(.9) rotate(-1deg)">UNDER</div>
 <div class="hv" style="left:21.5px;top:182.3px;transform:scaleX(.905) rotate(-1.5deg)">GROUND</div>
 <div class="abs" style="left:28px;top:234.5px;width:151px;height:1px;background:#8a8a86;transform:rotate(.4deg)"></div>
 <div class="abs" style="left:36.6px;top:239.5px;font-family:'Liberation Mono',monospace;font-size:8px;line-height:10px;letter-spacing:.33px;color:#555;white-space:nowrap">EST. 2024 // TACTILE GOODS</div>
 <div class="abs" style="left:28px;top:254.5px;width:151px;height:1px;background:#8a8a86;transform:rotate(.4deg)"></div>
 <div class="abs" style="left:17.2px;top:316.1px;width:180.6px;height:72.2px;background:#f26b5f"></div>
 <div class="abs" style="left:13.2px;top:312.1px;width:180.6px;height:72.2px;background:#1b1b1b"></div>
 <div class="abs" style="left:61.4px;top:325.5px;font-family:'Liberation Mono',monospace;font-weight:bold;font-size:11px;line-height:13px;letter-spacing:1.8px;color:#f4f4f4;white-space:nowrap">ENTER SHOP</div>
 <svg class="abs" style="left:75px;top:343.5px" width="8" height="9" viewBox="0 0 8 9"><path d="M4 .5v7.5M1 5l3 3 3-3" fill="none" stroke="#8a8a8a" stroke-width=".8"/></svg>
 <div class="abs" style="left:86px;top:344.5px;font-family:'Liberation Mono',monospace;font-size:5.6px;line-height:7px;color:#6a6a6a;white-space:nowrap;letter-spacing:.3px">ADMIT ONE</div>
 <svg class="abs" style="left:124.5px;top:343.5px" width="8" height="9" viewBox="0 0 8 9"><path d="M4 .5v7.5M1 5l3 3 3-3" fill="none" stroke="#8a8a8a" stroke-width=".8"/></svg>
 <div class="abs" style="left:13.2px;top:362.6px;width:180.6px;height:0;border-top:1px dashed #4a4a4a"></div>
 <div class="abs" style="left:93.9px;top:368px;width:18px;height:12px;background:repeating-linear-gradient(90deg,#8a8a8a 0 1.5px,transparent 1.5px 2.5px,#8a8a8a 2.5px 3.5px,transparent 3.5px 5px)"></div>
 <div class="abs" style="left:49.8px;top:397px;font-family:'Liberation Mono',monospace;font-size:6.1px;line-height:8px;color:#7a7a7a;white-space:nowrap;letter-spacing:0">NO. 00304-21 • PRINTED IN USA</div>
</div>
<!-- phone 2 -->
<div class="phone" style="left:431px;top:259px;width:206px;height:641px;background:#f1f1ef">
 <svg class="abs" style="left:0;top:42px" width="206" height="556"><filter id="nz"><feTurbulence type="fractalNoise" baseFrequency=".9" numOctaves="2" seed="3"/><feColorMatrix values="0 0 0 0 0  0 0 0 0 0  0 0 0 0 0  0 0 0 .09 0"/></filter><rect width="206" height="556" filter="url(#nz)"/></svg>
 <div class="abs" style="left:0;top:0;width:206px;height:42px;background:#f7f5f0;border-bottom:1.5px solid #1c1c1c"></div>
 <div class="abs" style="left:13.6px;top:11.9px;font-size:20px;line-height:20px;font-weight:bold;color:#1a1a1a;transform:scaleX(.85);transform-origin:0 50%;letter-spacing:-.4px;white-space:nowrap;-webkit-text-stroke:.7px #1a1a1a">FRESH INK</div>
 <svg class="abs" style="left:169px;top:9px" width="24" height="24" viewBox="0 0 24 24"><defs><clipPath id="pa2"><circle cx="12" cy="12" r="10.5"/></clipPath></defs><circle cx="12" cy="12" r="12" fill="#7fd8e4"/><circle cx="12" cy="12" r="11.2" fill="#1f4a56"/><g clip-path="url(#pa2)"><rect width="24" height="24" fill="#2e3433"/><ellipse cx="12" cy="11" rx="6.5" ry="8" fill="#6a6c6a"/><ellipse cx="11" cy="8" rx="4" ry="3" fill="#8a8c8a"/><ellipse cx="10" cy="12" rx="1.5" ry="1" fill="#222"/><ellipse cx="14.5" cy="12" rx="1.5" ry="1" fill="#222"/><ellipse cx="12" cy="20" rx="6" ry="3" fill="#4a4c4a"/><ellipse cx="5" cy="16" rx="2" ry="3" fill="#9a9a9a"/></g></svg>
 <div class="abs" style="left:188px;top:6.6px;width:7.5px;height:7.5px;border-radius:50%;background:#f45e5a;box-shadow:0 0 0 1px #3a1a1a"></div>
 <!-- new arrivals -->
 <svg class="abs" style="left:13px;top:62px" width="10" height="10" viewBox="0 0 24 24" fill="none" stroke="#f0675b" stroke-width="2.6" stroke-linecap="round" stroke-linejoin="round"><path d="M9.937 15.5A2 2 0 0 0 8.5 14.063l-6.135-1.582a.5.5 0 0 1 0-.962L8.5 9.936A2 2 0 0 0 9.937 8.5l1.582-6.135a.5.5 0 0 1 .963 0L14.063 8.5A2 2 0 0 0 15.5 9.937l6.135 1.581a.5.5 0 0 1 0 .964L15.5 14.063a2 2 0 0 0-1.437 1.437l-1.582 6.135a.5.5 0 0 1-.963 0z"/><path d="M20 3v4M22 5h-4M4 17v2M5 18H3"/></svg>
 <div class="abs" style="left:27.8px;top:60.5px;font-size:11px;line-height:13px;font-weight:bold;color:#1a1a1a;transform:scaleX(.876);transform-origin:0 50%;white-space:nowrap;-webkit-text-stroke:.35px #1a1a1a">NEW ARRIVALS</div>
 <div class="abs" style="left:158.4px;top:64px;font-family:'Liberation Mono',monospace;font-size:7.3px;line-height:9px;color:#1a1a1a;text-decoration:underline;white-space:nowrap">View All</div>
 <div class="abs" style="left:17.5px;top:87.5px;width:125px;height:125px;background:#fff"></div>
 <svg class="abs" style="left:13.5px;top:83.4px" width="125" height="125" viewBox="0 0 125 125">
  <defs><pattern id="grd" width="2.6" height="2.6" patternUnits="userSpaceOnUse"><path d="M2.6 0V2.6H0" fill="none" stroke="#9a9a9a" stroke-width=".35" opacity=".5"/></pattern>
  <linearGradient id="bk1" x1="0" y1="0" x2="1" y2="0"><stop offset="0" stop-color="#a8a8a8"/><stop offset="1" stop-color="#e2e2e2"/></linearGradient>
  <linearGradient id="bk2" x1="0" y1="0" x2="0" y2="1"><stop offset="0" stop-color="#e4e4e4"/><stop offset="1" stop-color="#a9a9a9"/></linearGradient></defs>
  <rect x="0" y="0" width="125" height="125" fill="#dcdcdc"/>
  <rect x="8" y="10" width="18" height="26" fill="url(#bk1)"/><rect x="4" y="28" width="14" height="38" fill="url(#bk2)"/>
  <rect x="18" y="35" width="10" height="20" fill="url(#bk1)"/>
  <rect x="80" y="4" width="16" height="20" fill="url(#bk2)"/><rect x="96" y="18" width="12" height="10" fill="url(#bk1)"/>
  <rect x="110" y="28" width="15" height="20" fill="url(#bk2)"/><rect x="100" y="40" width="10" height="12" fill="url(#bk1)"/>
  <rect x="2" y="88" width="12" height="25" fill="url(#bk2)"/><rect x="12" y="100" width="14" height="18" fill="url(#bk1)"/>
  <rect x="98" y="85" width="14" height="30" fill="url(#bk2)"/><rect x="106" y="95" width="14" height="20" fill="url(#bk1)"/>
  <rect x="30" y="112" width="10" height="13" fill="url(#bk2)"/><rect x="82" y="110" width="12" height="15" fill="url(#bk1)"/>
  <path d="M27 62a35 35 0 0 1 70 0z" fill="#bdbdbd"/>
  <path d="M27 62a35 35 0 0 0 70 0z" fill="#d6d6d6"/>
  <path d="M62 27L80 58H44z" fill="#d9d9d9"/>
  <path d="M40 66h44l9 17H31z" fill="#c3c3c3"/>
  <rect x="38" y="52" width="12" height="12" fill="#e6e6e6"/>
  <rect x="15" y="99" width="92" height="22" fill="#d9d9d9"/>
  <rect x="0" y="0" width="125" height="125" fill="url(#grd)"/>
  <rect x="0" y="0" width="125" height="125" fill="none" stroke="#2a2a2a" stroke-width="1.5"/>
 </svg>
 <div class="abs" style="left:115.5px;top:78px;width:28.5px;height:28.5px;border-radius:50%;background:#f0675b;box-shadow:0 0 0 1px #2a1a1a"></div>
 <div class="abs" style="left:115.5px;top:87.5px;width:28.5px;text-align:center;font-size:7.5px;line-height:9px;font-weight:bold;color:#fff">$24</div>
 <div class="abs" style="left:162px;top:87.5px;width:60px;height:125px;background:#fff"></div>
 <svg class="abs" style="left:158px;top:83.4px" width="48" height="125" viewBox="0 0 48 125"><rect width="48" height="125" fill="#000"/>
  <g fill="none" stroke="#4a4a4a" stroke-width=".7"><path d="M22 8c6 8 14 4 20 10s6 10 6 14M2 28c10-6 22 0 28 8s10 16 18 12M4 40c8 10 24-2 28 10s8 14 16 10M8 55c10-8 20 4 26 10M5 32c14 6 10 20 24 18M12 20c4 10 16 8 20 18s-8 20 6 24M18 12c-6 10 8 16 2 24s10 12 16 8M6 46c6-4 14 2 18 8s12 6 20 2M26 30c-4 6 4 12 10 10s10-6 12-2"/></g>
  <g fill="none" stroke="#e8e8e8" stroke-width=".9"><path d="M48 8c-6 2-9 9-6 14M48 58c-7 5-11 14-12 24-1 9 4 17 8 24M36 82c-4 2-6 8-3 14s5 8 8 5M48 108c-8 8-18 12-28 16M42 70c2-2 4-2 6 0"/></g>
 </svg>
 <div class="abs" style="left:13px;top:217px;font-size:9.6px;line-height:12px;font-weight:bold;color:#1a1a1a;white-space:nowrap">GEOMETRY</div>
 <div class="abs" style="left:13px;top:229.5px;font-family:'Liberation Serif',serif;font-style:italic;font-size:10.3px;line-height:13px;color:#555;white-space:nowrap">The Shapes</div>
 <div class="abs" style="left:158.4px;top:217px;font-size:9.6px;line-height:12px;font-weight:bold;color:#1a1a1a;white-space:nowrap">URBAN DECAY</div>
 <div class="abs" style="left:158.4px;top:229.5px;font-family:'Liberation Serif',serif;font-style:italic;font-size:10.3px;line-height:13px;color:#555;white-space:nowrap">Concrete Jungle</div>
 <!-- staff picks -->
 <svg class="abs" style="left:13px;top:276px" width="10" height="9" viewBox="0 0 10 9"><rect x=".6" y=".6" width="8.8" height="7.8" rx="1" fill="none" stroke="#1a1a1a" stroke-width="1.1"/><rect x="2.4" y="2.6" width="5.2" height="2.2" fill="none" stroke="#1a1a1a" stroke-width=".9"/><path d="M2.5 7.6l1-1.4h3l1 1.4" fill="none" stroke="#1a1a1a" stroke-width=".8"/></svg>
 <div class="abs" style="left:27.7px;top:274px;font-size:10.5px;line-height:13px;font-weight:bold;color:#1a1a1a;transform:scaleX(.9);transform-origin:0 50%;white-space:nowrap;-webkit-text-stroke:.35px #1a1a1a">STAFF PICKS</div>
 <div class="abs" style="left:13px;top:289.5px;font-family:'Liberation Mono',monospace;font-size:6.3px;line-height:8px;color:#8a8a8a;white-space:nowrap">Curated by DJ Shadow</div>
 <div class="abs" style="left:16.5px;top:313.8px;width:180.3px;height:33.2px;background:#111"></div>
 <div class="abs" style="left:13px;top:310.3px;width:180.3px;height:33.2px;background:#e0aa1d;box-shadow:inset 0 0 0 1px #1a1a1a"></div>
 <div class="abs" style="left:134px;top:311.3px;width:3px;height:31.200000000000003px;border-left:1px solid rgba(0,0,0,.22);border-right:1px solid rgba(0,0,0,.22)"></div>
 <div class="abs" style="left:22px;top:322.1px;width:27.5px;height:9.2px;background:#f1dc98;box-shadow:inset 0 0 0 1px rgba(30,30,30,.8)"></div>
 <div class="abs" style="left:22px;top:323.9px;width:27.5px;text-align:center;font-family:'Liberation Mono',monospace;font-weight:bold;font-size:6.4px;line-height:8px;color:#1a1a1a;white-space:nowrap">A-SIDE</div>
 <div class="abs" style="left:57.9px;top:319.1px;font-family:'Liberation Mono',monospace;font-weight:bold;font-size:7.6px;line-height:9px;color:#1a1a1a;white-space:nowrap">DAFT PUNK</div>
 <div class="abs" style="left:57.9px;top:329.2px;font-size:5.6px;line-height:7px;color:#3a2e08;white-space:nowrap;opacity:.85">Discovery (2001)</div>
 <div class="abs" style="left:166.6px;top:321.6px;font-size:9.2px;line-height:11px;color:#222;white-space:nowrap">Hot!</div>
 <div class="abs" style="left:16.5px;top:356.5px;width:180.3px;height:32.3px;background:#111"></div>
 <div class="abs" style="left:13px;top:353.0px;width:180.3px;height:32.3px;background:#f26a5d;box-shadow:inset 0 0 0 1px #1a1a1a"></div>
 <div class="abs" style="left:140.8px;top:354.0px;width:3px;height:30.299999999999997px;border-left:1px solid rgba(0,0,0,.22);border-right:1px solid rgba(0,0,0,.22)"></div>
 <div class="abs" style="left:22px;top:364.8px;width:27.5px;height:9.2px;background:#f6b4ab;box-shadow:inset 0 0 0 1px rgba(30,30,30,.8)"></div>
 <div class="abs" style="left:22px;top:366.6px;width:27.5px;text-align:center;font-family:'Liberation Mono',monospace;font-weight:bold;font-size:6.4px;line-height:8px;color:#1a1a1a;white-space:nowrap">A-SIDE</div>
 <div class="abs" style="left:57.9px;top:361.8px;font-family:'Liberation Mono',monospace;font-weight:bold;font-size:7.6px;line-height:9px;color:#fff;white-space:nowrap">GORILLAZ</div>
 <div class="abs" style="left:57.9px;top:371.9px;font-size:5.6px;line-height:7px;color:#fde0dc;white-space:nowrap;opacity:.85">Demon Days (2005)</div>
 <svg class="abs" style="left:174.5px;top:364.0px" width="9" height="8" viewBox="0 0 24 22"><path d="M12 20s-9-5.5-9-12a5 5 0 0 1 9-3 5 5 0 0 1 9 3c0 6.5-9 12-9 12z" fill="none" stroke="#fff" stroke-width="2.4"/></svg>
 <div class="abs" style="left:16.5px;top:398.3px;width:180.3px;height:32.2px;background:#111"></div>
 <div class="abs" style="left:13px;top:394.8px;width:180.3px;height:32.2px;background:#87a893;box-shadow:inset 0 0 0 1px #1a1a1a"></div>
 <div class="abs" style="left:134px;top:395.8px;width:3px;height:30.200000000000003px;border-left:1px solid rgba(0,0,0,.22);border-right:1px solid rgba(0,0,0,.22)"></div>
 <div class="abs" style="left:22px;top:406.6px;width:27.5px;height:9.2px;background:#d2e0d6;box-shadow:inset 0 0 0 1px rgba(30,30,30,.8)"></div>
 <div class="abs" style="left:22px;top:408.4px;width:27.5px;text-align:center;font-family:'Liberation Mono',monospace;font-weight:bold;font-size:6.4px;line-height:8px;color:#1a1a1a;white-space:nowrap">B-SIDE</div>
 <div class="abs" style="left:57.9px;top:403.6px;font-family:'Liberation Mono',monospace;font-weight:bold;font-size:7.6px;line-height:9px;color:#1a1a1a;white-space:nowrap">RADIOHEAD</div>
 <div class="abs" style="left:57.9px;top:413.7px;font-size:5.6px;line-height:7px;color:#2e3e33;white-space:nowrap;opacity:.85">In Rainbows (2007)</div>
 <div class="abs" style="left:161.7px;top:407.1px;font-family:'Liberation Mono',monospace;font-weight:bold;font-size:7px;line-height:8px;color:#1f2a22;white-space:nowrap">$14.00</div>
 <div class="abs" style="left:16.5px;top:440.1px;width:180.3px;height:32.6px;background:#111"></div>
 <div class="abs" style="left:13px;top:436.6px;width:180.3px;height:32.6px;background:#fbfbf9;box-shadow:inset 0 0 0 1px #1a1a1a"></div>
 <div class="abs" style="left:130px;top:437.6px;width:3px;height:30.6px;border-left:1px solid rgba(0,0,0,.22);border-right:1px solid rgba(0,0,0,.22)"></div>
 <div class="abs" style="left:22px;top:448.40000000000003px;width:20px;height:9.2px;background:#f0f0ee;box-shadow:inset 0 0 0 1px rgba(30,30,30,.8)"></div>
 <div class="abs" style="left:22px;top:450.2px;width:20px;text-align:center;font-family:'Liberation Mono',monospace;font-weight:bold;font-size:6.4px;line-height:8px;color:#1a1a1a;white-space:nowrap">RARE</div>
 <div class="abs" style="left:50.5px;top:445.4px;font-family:'Liberation Mono',monospace;font-weight:bold;font-size:7.6px;line-height:9px;color:#1a1a1a;white-space:nowrap">MF DOOM</div>
 <div class="abs" style="left:50.5px;top:455.5px;font-size:5.6px;line-height:7px;color:#333;white-space:nowrap;opacity:.85">Mm..Food (2004)</div>
 <div class="abs" style="left:165.2px;top:448.20000000000005px;width:19.4px;height:8.6px;background:#f3e46a"></div>
 <div class="abs" style="left:165.2px;top:448.6px;width:19.4px;text-align:center;font-family:'Liberation Mono',monospace;font-size:6px;line-height:8px;color:#333;white-space:nowrap">SOLD</div>
 <!-- vibe check -->
 <div class="abs" style="left:13.7px;top:491.7px;font-size:11px;line-height:13px;font-weight:bold;color:#1a1a1a;transform:scaleX(.857);transform-origin:0 50%;white-space:nowrap;-webkit-text-stroke:.35px #1a1a1a">VIBE CHECK</div>
 <div class="abs" style="left:13.2px;top:514px;width:48.6px;height:20px;border-radius:10px;background:#1b1b1b;box-shadow:2px 2px 2px rgba(0,0,0,.25)"></div>
 <div class="abs" style="left:13.2px;top:519.5px;width:48.6px;text-align:center;font-family:'Liberation Mono',monospace;font-size:7.2px;line-height:9px;color:#f0f0f0">#Chill</div>
 <div class="abs" style="left:68.7px;top:514px;width:67px;height:20px;border-radius:10px;background:#ecebe7;box-shadow:inset 0 0 0 1.2px #1a1a1a,2px 2px 0 #111"></div>
 <div class="abs" style="left:68.7px;top:519.5px;width:67px;text-align:center;font-family:'Liberation Mono',monospace;font-size:7.2px;line-height:9px;color:#1a1a1a">#Energetic</div>
 <div class="abs" style="left:142px;top:514px;width:45.3px;height:20px;border-radius:10px;background:#ecebe7;box-shadow:inset 0 0 0 1.2px #1a1a1a,2px 2px 0 #111"></div>
 <div class="abs" style="left:142px;top:519.5px;width:45.3px;text-align:center;font-family:'Liberation Mono',monospace;font-size:7.2px;line-height:9px;color:#1a1a1a">#Dark</div>
 <div class="abs" style="left:13.2px;top:541.3px;width:71.6px;height:20px;border-radius:10px;background:#ecebe7;box-shadow:inset 0 0 0 1.2px #1a1a1a,2px 2px 0 #111"></div>
 <div class="abs" style="left:13.2px;top:546.8px;width:71.6px;text-align:center;font-family:'Liberation Mono',monospace;font-size:7.2px;line-height:9px;color:#1a1a1a">#Melancholy</div>
 <!-- bottom nav -->
 <div class="abs" style="left:0;top:597px;width:206px;height:44px;background:#f8f7f3;border-top:1.2px solid #1c1c1c"></div>
 <svg class="abs" style="left:25px;top:607px" width="16" height="10" viewBox="0 0 16 10"><circle cx="4.2" cy="5" r="3.6" fill="none" stroke="#444" stroke-width=".8"/><circle cx="10.8" cy="5" r="3.8" fill="none" stroke="#1a1a1a" stroke-width="1.1"/><circle cx="10.8" cy="5" r="1.2" fill="#1a1a1a"/></svg>
 <svg class="abs" style="left:79px;top:608px" width="10" height="10" viewBox="0 0 10 10"><circle cx="4.3" cy="4.3" r="3.2" fill="none" stroke="#8a8a8a" stroke-width=".8"/><path d="M6.6 6.6l2.4 2.4" stroke="#8a8a8a" stroke-width=".8"/></svg>
 <svg class="abs" style="left:128px;top:608px" width="9" height="10" viewBox="0 0 9 10"><path d="M1.5 1v8M3.5 1v8M5.5 1.5l2.5 7.5" stroke="#9a9a9a" stroke-width=".8" fill="none"/></svg>
 <svg class="abs" style="left:177.5px;top:607.5px" width="9" height="10" viewBox="0 0 9 10"><circle cx="4.5" cy="2.8" r="2" fill="none" stroke="#9a9a9a" stroke-width=".8"/><path d="M1 9.5c0-2.2 1.6-3.5 3.5-3.5S8 7.3 8 9.5" fill="none" stroke="#9a9a9a" stroke-width=".8"/></svg>
 <div class="abs" style="left:19.8px;top:627.5px;width:20px;height:2px;background:#1a1a1a"></div>
</div>
<!-- phone 3 -->
<div class="phone" style="left:702px;top:259px;width:206px;height:446px;background:#faf9f6">
 <div class="abs" style="left:-3.6px;top:7.5px;font-size:8.4px;line-height:10px;font-weight:bold;letter-spacing:.38px;color:#111;white-space:nowrap;transform:rotate(-.5deg);transform-origin:0 50%">NOW SPINNING • NOW SPINNING • NOW SPINNING • NOW SPINNING</div>
 <div class="abs" style="left:0;top:20.5px;width:204px;height:1.8px;background:#2a2a2a;transform:rotate(-.88deg);transform-origin:0 50%"></div>
 <div class="abs" style="left:109.5px;top:41.4px;width:1.6px;height:24px;background:#111"></div>
 <svg class="abs" style="left:113px;top:48.5px" width="9" height="9" viewBox="0 0 9 9"><path d="M2.6 7V1.6L8 .8v5.4" fill="none" stroke="#111" stroke-width=".8"/><circle cx="1.7" cy="7.1" r="1.1" fill="none" stroke="#111" stroke-width=".8"/><circle cx="7.1" cy="6.3" r="1.1" fill="none" stroke="#111" stroke-width=".8"/></svg>
</div>
<!-- phone 4 -->
<div class="phone" style="left:973px;top:259px;width:206px;height:446px;background:#a2ece8">
 <div class="abs" style="left:-40px;top:-40px;width:286px;height:526px;filter:blur(22px)">
  <div class="abs" style="left:-20px;top:170px;width:220px;height:240px;border-radius:50%;background:#acf6f2"></div>
  <div class="abs" style="left:20px;top:300px;width:120px;height:130px;border-radius:50%;background:#a8d6f4"></div>
  <div class="abs" style="left:-30px;top:400px;width:100px;height:170px;border-radius:50%;background:#e4e2fa;transform:rotate(15deg)"></div>
  <div class="abs" style="left:190px;top:360px;width:120px;height:200px;border-radius:50%;background:#6ccece"></div>
  <div class="abs" style="left:140px;top:400px;width:60px;height:140px;border-radius:50%;background:#7aa2e2;transform:rotate(20deg)"></div>
  <div class="abs" style="left:78px;top:310px;width:66px;height:250px;border-radius:50%;background:#a296ee;transform:rotate(22deg)"></div>
  <div class="abs" style="left:185px;top:125px;width:70px;height:210px;border-radius:50%;background:#5a94a8;transform:rotate(40deg)"></div>
  <div class="abs" style="left:245px;top:280px;width:40px;height:90px;border-radius:50%;background:#8c8a84"></div>
  <div class="abs" style="left:-40px;top:-80px;width:340px;height:165px;border-radius:50%;background:#5e6b3c"></div>
  <div class="abs" style="left:200px;top:90px;width:110px;height:170px;border-radius:50%;background:#4f705a"></div>
  <div class="abs" style="left:175px;top:-30px;width:140px;height:190px;border-radius:50%;background:#6e4a1c;opacity:.9"></div>
  <div class="abs" style="left:-20px;top:85px;width:320px;height:55px;border-radius:50%;background:#6a8a66;opacity:.5;transform:rotate(20deg)"></div>
 </div>
</div>
<!-- bottom toolbar -->
<div class="abs" style="left:559px;top:939px;width:215px;height:38px;border-radius:19px;background:#0b0b0b;box-shadow:0 4px 14px rgba(0,0,0,.35)"></div>
<svg class="abs" style="left:574px;top:951px" width="14" height="14" viewBox="0 0 24 24" fill="none" stroke="#d8d8d8" stroke-width="2" stroke-linecap="round" stroke-linejoin="round"><path d="M4.037 4.688a.495.495 0 0 1 .651-.651l16 6.5a.5.5 0 0 1-.063.947l-6.124 1.58a2 2 0 0 0-1.438 1.435l-1.579 6.126a.5.5 0 0 1-.947.063z"/></svg>
<div class="abs" style="left:595px;top:945px;width:25.5px;height:25px;border-radius:7px;background:#343434"></div>
<svg class="abs" style="left:600.5px;top:950px" width="15" height="15" viewBox="0 0 24 24" fill="none" stroke="#f0f0f0" stroke-width="2" stroke-linecap="round" stroke-linejoin="round"><path d="M18 11V6a2 2 0 0 0-2-2a2 2 0 0 0-2 2"/><path d="M14 10V4a2 2 0 0 0-2-2a2 2 0 0 0-2 2v2"/><path d="M10 10.5V6a2 2 0 0 0-2-2a2 2 0 0 0-2 2v8"/><path d="M18 8a2 2 0 1 1 4 0v6a8 8 0 0 1-8 8h-2c-2.8 0-4.5-.86-5.99-2.34l-3.6-3.6a2 2 0 0 1 2.83-2.82L7 15"/></svg>
<div class="abs" style="left:642px;top:957.5px;width:10px;height:1.4px;background:#cfcfcf"></div>
<div class="abs" style="left:667px;top:952px;font-size:11px;line-height:13px;color:#e6e6e6">60%</div>
<div class="abs" style="left:705px;top:957.3px;width:10px;height:1.4px;background:#cfcfcf"></div>
<div class="abs" style="left:709.3px;top:953px;width:1.4px;height:10px;background:#cfcfcf"></div>
<div class="abs" style="left:744px;top:952px;font-size:11px;line-height:13px;color:#e6e6e6">Fit</div>
<!-- grab cursor -->
<svg class="abs" style="left:777.5px;top:802px" width="16" height="17" viewBox="0 0 16 17"><g stroke="#000" stroke-width="3.4" stroke-linecap="round" fill="none"><path d="M6 11L1.2 6.9"/><path d="M6.4 10L3.4 2"/><path d="M8 10L7.4 1.3"/><path d="M9.6 10L10.4 2.4"/><path d="M11 10.5L13.4 4.2"/></g><ellipse cx="8.4" cy="11.4" rx="5" ry="4.2" fill="#000"/><g stroke="#fff" stroke-width="2.1" stroke-linecap="round" fill="none"><path d="M6 11L1.2 6.9"/><path d="M6.4 10L3.4 2"/><path d="M8 10L7.4 1.3"/><path d="M9.6 10L10.4 2.4"/><path d="M11 10.5L13.4 4.2"/></g><ellipse cx="8.4" cy="11.2" rx="4" ry="3.2" fill="#fff"/><path d="M7.4 10v3M8.9 10v3M10.4 10v3" stroke="#000" stroke-width=".7"/></svg>
<svg class="abs" style="left:1380px;top:1012px;filter:blur(1.5px)" width="280" height="68" viewBox="0 0 280 68"><defs><linearGradient id="trk" x1="0" y1="0" x2="1" y2="0"><stop offset="0" stop-color="#a06a3e"/><stop offset="1" stop-color="#5e3e2a"/></linearGradient></defs><path d="M128 0H205C200 25 200 50 205 68H105C115 45 122 25 128 0z" fill="#2a221b" opacity=".8"/><path d="M100 0H130C124 25 112 50 108 68H72C82 50 94 25 100 0z" fill="url(#trk)" opacity=".9"/></svg>
<div class="abs" style="left:325.8px;top:1014.1px;width:1008px;height:60.5px;border-radius:17px;background:rgba(30,34,28,.72);box-shadow:inset 0 0 0 1px rgba(140,150,135,.3)"></div>
<svg class="abs" style="left:334.7px;top:1023.3px" width="38" height="38" viewBox="0 0 38 38"><defs><linearGradient id="fnd" x1="0" y1="0" x2="0" y2="1"><stop offset="0" stop-color="#2fb5f8"/><stop offset="1" stop-color="#1d6fe6"/></linearGradient></defs>
<rect width="38" height="38" rx="9" fill="#e4e8ee"/><path d="M9 0H20C17 8 15 14 16 20H19C18 26 19 32 21 38H9A9 9 0 0 1 0 29V9A9 9 0 0 1 9 0z" fill="url(#fnd)"/>
<path d="M6 25c7 5 19 5 26 0" fill="none" stroke="#1a2a3a" stroke-width="1.4"/><path d="M10 11v4M28 11v4" stroke="#1a2a3a" stroke-width="1.4"/></svg>
<svg class="abs" style="left:385.2px;top:1023.3px" width="38" height="38" viewBox="0 0 38 38"><rect width="38" height="38" rx="9" fill="#b9b9b7"/><rect x="8.0" y="8.0" width="6.4" height="6.4" rx="2" fill="#3cc747"/><rect x="16.4" y="8.0" width="6.4" height="6.4" rx="2" fill="#f5c02b"/><rect x="24.8" y="8.0" width="6.4" height="6.4" rx="2" fill="#f38a1e"/><rect x="8.0" y="16.4" width="6.4" height="6.4" rx="2" fill="#e0302a"/><rect x="16.4" y="16.4" width="6.4" height="6.4" rx="2" fill="#a9b0b8"/><rect x="24.8" y="16.4" width="6.4" height="6.4" rx="2" fill="#f0426a"/><rect x="8.0" y="24.8" width="6.4" height="6.4" rx="2" fill="#9b45d8"/><rect x="16.4" y="24.8" width="6.4" height="6.4" rx="2" fill="#2f9cf0"/><rect x="24.8" y="24.8" width="6.4" height="6.4" rx="2" fill="#2fcf9a"/></svg>
<svg class="abs" style="left:435.8px;top:1023.3px" width="38" height="38" viewBox="0 0 38 38"><defs><linearGradient id="ml" x1="0" y1="0" x2="0" y2="1"><stop offset="0" stop-color="#1b6ff3"/><stop offset="1" stop-color="#33b8fa"/></linearGradient></defs>
<rect width="38" height="38" rx="9" fill="url(#ml)"/><rect x="6" y="11" width="26" height="17" rx="2" fill="#f2f2f2"/><path d="M6.5 12l12.5 9 12.5-9" fill="none" stroke="#b8b8b8" stroke-width="1.3"/></svg>
<svg class="abs" style="left:486.3px;top:1023.3px" width="38" height="38" viewBox="0 0 38 38"><rect width="38" height="38" rx="9" fill="#f7f7f7"/><path d="M9 0H29A9 9 0 0 1 38 9V11H0V9A9 9 0 0 1 9 0z" fill="#ea4a3f"/>
<text x="19" y="8.8" text-anchor="middle" font-family="Liberation Sans" font-weight="bold" font-size="7" fill="#fff">FEB</text>
<text x="19" y="33" text-anchor="middle" font-family="Liberation Sans" font-size="21" fill="#222">2</text></svg>
<svg class="abs" style="left:536.9px;top:1023.3px" width="38" height="38" viewBox="0 0 38 38"><rect width="38" height="38" rx="9" fill="#f4f1e6"/><path d="M9 0H29A9 9 0 0 1 38 9V10H0V9A9 9 0 0 1 9 0z" fill="#f9c52c"/>
<path d="M0 18h38M0 26h38" stroke="#dedad0" stroke-width=".8"/></svg>
<svg class="abs" style="left:587.5px;top:1023.3px" width="38" height="38" viewBox="0 0 38 38"><defs><linearGradient id="st" x1="0" y1="0" x2="0" y2="1"><stop offset="0" stop-color="#c9c9cb"/><stop offset="1" stop-color="#8e8e92"/></linearGradient></defs>
<rect width="38" height="38" rx="9" fill="url(#st)"/><circle cx="19" cy="19" r="15" fill="#3d3d40"/><circle cx="19" cy="19" r="12.5" fill="#8a8a8e"/><circle cx="19" cy="19" r="10" fill="#505054"/>
<circle cx="19" cy="19" r="7.5" fill="#8a8a8e"/><path d="M19 19V10M19 19l8 5M19 19l-8 5" stroke="#454548" stroke-width="2.2"/><circle cx="19" cy="19" r="2.4" fill="#555"/></svg>
<svg class="abs" style="left:638.0px;top:1023.3px" width="38" height="38" viewBox="0 0 38 38"><rect width="38" height="38" rx="9" fill="#161614"/><path d="M19 6L31 13V25L19 32L7 25V13z" fill="#7a7a78"/><path d="M7 13L19 20L31 13L19 6z" fill="#d9d9d7"/><path d="M19 20L31 13V25L19 32z" fill="#a0a09e"/><path d="M19 20V32L7 25V13z" fill="#5a5a58"/></svg>
<svg class="abs" style="left:688.5px;top:1023.3px" width="38" height="38" viewBox="0 0 38 38"><rect width="38" height="38" rx="9" fill="#f3f3f3"/>
<g transform="translate(19 19)">
<path d="M0-15A15 15 0 0 1 13 -7.5H0A7.5 7.5 0 0 0 -6.5 -3.75L-13 -7.5A15 15 0 0 1 0-15z" fill="#e33b2e"/>
<path d="M13-7.5A15 15 0 0 1 0 15L6.5 3.75A7.5 7.5 0 0 0 6.5-3.75z" fill="#f6c026"/>
<path d="M0 15A15 15 0 0 1-13-7.5L-6.5 3.75A7.5 7.5 0 0 0 6.5 3.75z" fill="#2ba24c"/>
<circle r="6.3" fill="#fff"/><circle r="5" fill="#1a73e8"/></g></svg>
<svg class="abs" style="left:739.1px;top:1023.3px" width="38" height="38" viewBox="0 0 38 38"><rect width="38" height="38" rx="9" fill="#f2eee2"/><path d="M6 12c3 0 5 10 8 12s4-12 7-10 3 10 7 10c3 0 3-10 4-12" fill="none" stroke="#111" stroke-width="4" stroke-linecap="round"/><rect x="29" y="10" width="3.5" height="7" fill="#111"/></svg>
<svg class="abs" style="left:789.6px;top:1023.3px" width="38" height="38" viewBox="0 0 38 38"><defs><linearGradient id="arc" x1="0" y1="0" x2="0" y2="1"><stop offset="0" stop-color="#f36b3c"/><stop offset=".35" stop-color="#7fb848"/><stop offset=".7" stop-color="#3b8cf0"/><stop offset="1" stop-color="#3a6ef0"/></linearGradient></defs>
<path d="M4 31C9 30 14 10 19 5c5 5 10 25 15 26-4 1-8-4-10-9-2-5-3-8-5-8s-3 3-5 8c-2 5-6 10-10 9z" fill="url(#arc)"/></svg>
<svg class="abs" style="left:840.2px;top:1023.3px" width="38" height="38" viewBox="0 0 38 38"><rect width="38" height="38" rx="9" fill="#f7f7f7"/><path d="M19 5L26 6l4 4-1 4 2 3-3 11-9 6-9-6-3-11 2-3-1-4 4-4z" fill="#ef5a2b"/><path d="M13 17l3 1 3-2 3 2 3-1-2 5 2 3-6 4-6-4 2-3z" fill="#fff" opacity=".9"/></svg>
<svg class="abs" style="left:890.8px;top:1023.3px" width="38" height="38" viewBox="0 0 38 38"><defs><radialGradient id="qt" cx=".5" cy=".4" r=".6"><stop offset="0" stop-color="#9ad8ff"/><stop offset=".6" stop-color="#3c8ee0"/><stop offset="1" stop-color="#8a9aa8"/></radialGradient></defs>
<rect width="38" height="38" rx="9" fill="#2a2a2c"/><circle cx="18" cy="18" r="12" fill="none" stroke="url(#qt)" stroke-width="6"/><path d="M24 24l8 8" stroke="#b8c0c8" stroke-width="5" stroke-linecap="round"/><circle cx="18" cy="18" r="7" fill="#222"/></svg>
<svg class="abs" style="left:941.3px;top:1023.3px" width="38" height="38" viewBox="0 0 38 38"><rect x="1" y="1" width="36" height="36" rx="8.5" fill="#141414" stroke="#9a9a9a" stroke-width="1.6"/><path d="M8 8l4 3-4 3" fill="none" stroke="#e8e8e8" stroke-width="1.3"/><path d="M13 15h6" stroke="#e8e8e8" stroke-width="1.3"/></svg>
<svg class="abs" style="left:991.8px;top:1023.3px" width="38" height="38" viewBox="0 0 38 38"><rect width="38" height="38" rx="9" fill="#f7f7f7"/><path d="M26 5L31 7.5V30.5L26 33L11 19.5z" fill="#2a86d8"/><path d="M26 5L11 19.5L26 33V25L17 19.5L26 13z" fill="#1e6fbf"/><path d="M11 14.5L7 17.5V21.5L11 24.5L14 19.5z" fill="#3a96e4"/><path d="M7 13l4-2 15 14-4 3z" fill="#1b5ea8"/></svg>
<svg class="abs" style="left:1042.4px;top:1023.3px" width="38" height="38" viewBox="0 0 38 38"><defs><linearGradient id="as" x1="0" y1="0" x2="0" y2="1"><stop offset="0" stop-color="#1ca8f8"/><stop offset="1" stop-color="#1a63e8"/></linearGradient></defs>
<rect width="38" height="38" rx="9" fill="url(#as)"/><path d="M15 8l11 20M23 8L12 28M8 24h22" stroke="#fff" stroke-width="2.6" stroke-linecap="round"/></svg>
<div class="abs" style="left:613px;top:1018px;width:16px;height:16px;border-radius:50%;background:#e8392f;color:#fff;font-size:9.5px;line-height:16px;text-align:center;font-weight:bold">1</div>
<div class="abs" style="left:1096px;top:1023px;width:1px;height:40px;background:rgba(160,160,150,.35)"></div>
<div class="abs" style="left:1272px;top:1023px;width:1px;height:40px;background:rgba(160,160,150,.35)"></div>
<svg class="abs" style="left:1114.3px;top:1023.3px" width="38" height="38" viewBox="0 0 38 38"><defs><linearGradient id="mu" x1="0" y1="0" x2="0" y2="1"><stop offset="0" stop-color="#fa5a6a"/><stop offset="1" stop-color="#e82a3e"/></linearGradient></defs>
<rect width="38" height="38" rx="9" fill="url(#mu)"/><path d="M15 27V11l13-3v16" fill="none" stroke="#fff" stroke-width="2.4"/><ellipse cx="12.5" cy="27" rx="3.5" ry="3" fill="#fff"/><ellipse cx="25.5" cy="24" rx="3.5" ry="3" fill="#fff"/></svg>
<svg class="abs" style="left:1164.5px;top:1023.3px" width="38" height="38" viewBox="0 0 38 38"><rect width="38" height="38" rx="9" fill="#f3f3f3"/>
<g transform="translate(19 19)">
<path d="M0-15A15 15 0 0 1 13 -7.5H0A7.5 7.5 0 0 0 -6.5 -3.75L-13 -7.5A15 15 0 0 1 0-15z" fill="#e33b2e"/>
<path d="M13-7.5A15 15 0 0 1 0 15L6.5 3.75A7.5 7.5 0 0 0 6.5-3.75z" fill="#f6c026"/>
<path d="M0 15A15 15 0 0 1-13-7.5L-6.5 3.75A7.5 7.5 0 0 0 6.5 3.75z" fill="#2ba24c"/>
<circle r="6.3" fill="#fff"/><circle r="5" fill="#1a73e8"/></g></svg>
<svg class="abs" style="left:1215.2px;top:1023.3px" width="38" height="38" viewBox="0 0 38 38"><defs><linearGradient id="wa" x1="0" y1="0" x2="0" y2="1"><stop offset="0" stop-color="#5ee06c"/><stop offset="1" stop-color="#25b83e"/></linearGradient></defs>
<rect width="38" height="38" rx="9" fill="url(#wa)"/><path d="M19 6.5a12.5 12.5 0 0 0-10.8 18.8L6.5 31.5l6.4-1.7A12.5 12.5 0 1 0 19 6.5z" fill="none" stroke="#fff" stroke-width="2.2"/><path d="M14 13c-1 1-1.500 3 0 5.500s4 5 7 5.500c1.500.2 2.500-.5 3-1.500l-2.500-2-1.500 1c-1.500-.5-3-2-3.500-3.500l1-1.500-2-2.500c-.5 0-1 0-1.500.5z" fill="#fff"/></svg>
<svg class="abs" style="left:1289px;top:1016px" width="34" height="48" viewBox="0 0 34 48"><defs><linearGradient id="tr2" x1="0" y1="0" x2="1" y2="0"><stop offset="0" stop-color="#6e6e6e"/><stop offset=".45" stop-color="#b0b0b0"/><stop offset="1" stop-color="#5e5e5e"/></linearGradient></defs><path d="M2 9h30l-3.5 37H5.5z" fill="url(#tr2)"/><ellipse cx="17" cy="9" rx="15" ry="3.2" fill="#8c8c8c" stroke="#bbb" stroke-width=".8"/><path d="M5 8l4-6 3 3 5-4 3 5 5-3 4 5" fill="#e2e6ea" stroke="#8aa8c0" stroke-width=".9"/><circle cx="10" cy="5" r="1.8" fill="#3aa8d8"/><circle cx="23" cy="4" r="1.6" fill="#d85a5a"/><path d="M7 14l2 30M12 14l1 30M17 14v30M22 14l-1 30M27 14l-2 30" stroke="#777" stroke-width=".5" opacity=".6"/></svg>
<div class="abs" style="left:351.3px;top:1069px;width:4px;height:4px;border-radius:50%;background:rgba(200,200,200,.75)"></div>
<div class="abs" style="left:704.8px;top:1069px;width:4px;height:4px;border-radius:50%;background:rgba(200,200,200,.75)"></div>

</body></html>
